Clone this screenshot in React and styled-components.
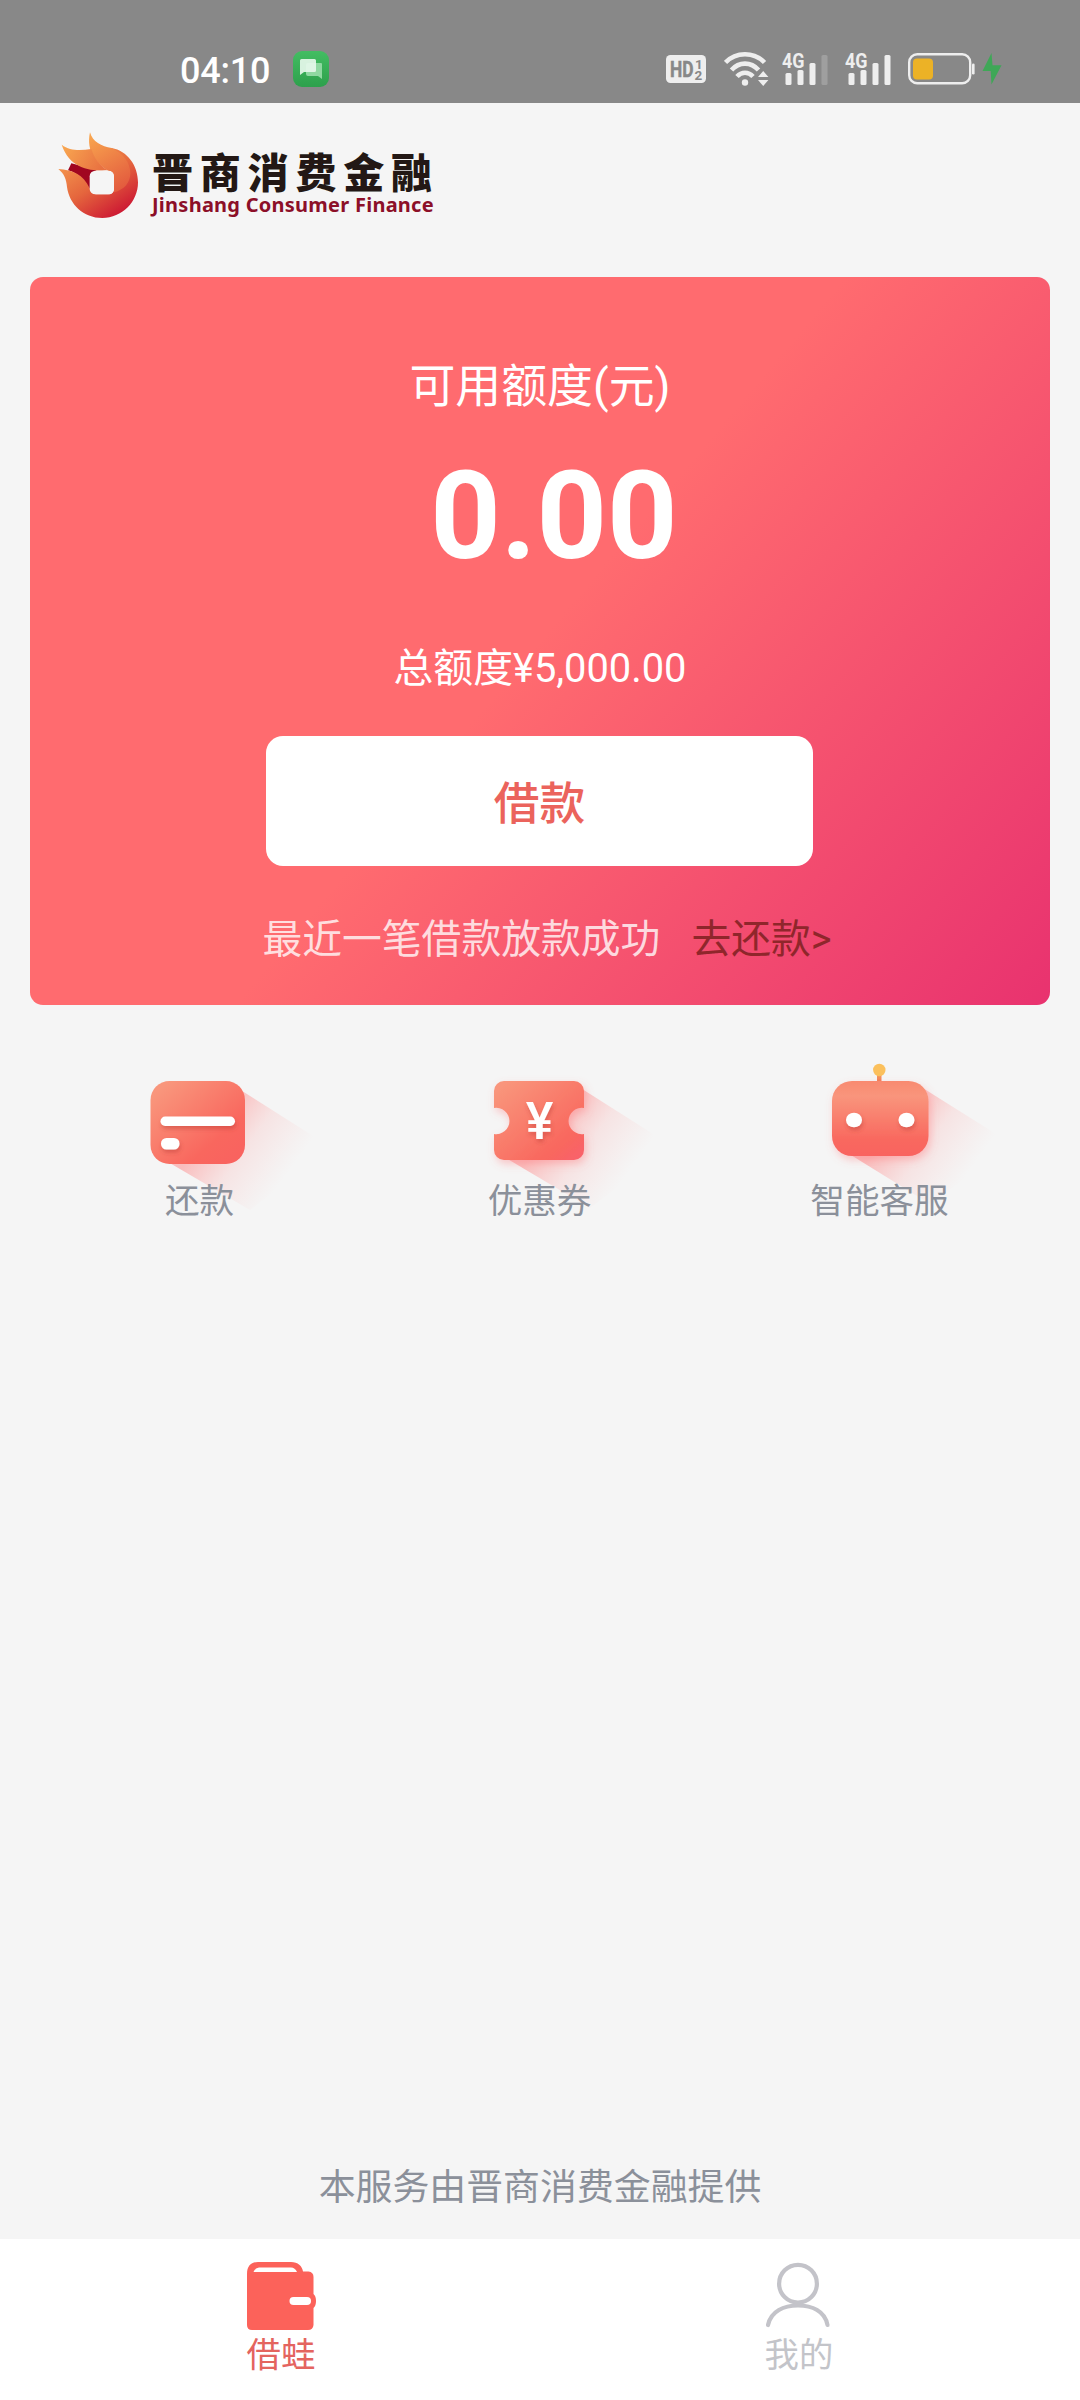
import React from 'react';
import styled, { createGlobalStyle } from 'styled-components';

const GlobalStyle = createGlobalStyle`
  * {
    box-sizing: border-box;
  }
  body {
    margin: 0;
    background: #f5f5f5;
    font-family: Roboto, 'Noto Sans CJK SC', sans-serif;
  }
`;

const Page = styled.div`
  width: 1080px;
  height: 2400px;
  display: flex;
  flex-direction: column;
  background: #f5f5f5;
  overflow: hidden;
`;

// Status bar
const StatusBar = styled.header`
  height: 103px;
  padding: 34px 78px 0 180px;
  display: flex;
  justify-content: space-between;
  align-items: center;
  background: #888;
`;
const StatusGroup = styled.div`
  display: flex;
  align-items: center;
  gap: ${(props) => props.$gap || 0}px;
`;
const Clock = styled.span`
  padding-top: 4px;
  color: #fff;
  font-size: 36px;
  font-weight: 500;
  line-height: 44px;
  letter-spacing: -0.2px;
`;

// Brand
const Brand = styled.div`
  height: 174px;
  padding: 29px 0 0 58px;
  display: flex;
  align-items: flex-start;
  gap: 14px;
`;
const BrandText = styled.div`
  padding-top: 15px;
  display: flex;
  flex-direction: column;
`;
const BrandName = styled.span`
  font-family: 'Noto Sans CJK SC', sans-serif;
  font-size: 41px;
  font-weight: 900;
  letter-spacing: 6.8px;
  line-height: 46px;
  color: #231815;
  white-space: nowrap;
`;
const BrandLatin = styled.span`
  font-family: 'Noto Sans', sans-serif;
  font-size: 20px;
  font-weight: 700;
  line-height: 24px;
  letter-spacing: 0.25px;
  color: #8c0f28;
  white-space: nowrap;
`;

// Credit card
const Card = styled.section`
  height: 728px;
  margin: 0 30px;
  display: flex;
  flex-direction: column;
  align-items: center;
  border-radius: 13px;
  background: linear-gradient(130deg, #ff6b6f 0%, #ff6b6f 50%, #e8316f 101%);
  color: #fff;
`;
const CardTitle = styled.h2`
  margin: 79px 0 0;
  font-size: 45.9px;
  font-weight: 400;
  line-height: 60px;
`;
const Amount = styled.strong`
  margin-top: 25px;
  padding-left: 28px;
  font-size: 123px;
  font-weight: 700;
  line-height: 150px;
`;
const Total = styled.p`
  margin: 52px 0 0;
  font-size: 39.8px;
  line-height: 52px;
`;
const BorrowButton = styled.button`
  width: 547px;
  height: 130px;
  margin: 41px 1px 0 0;
  padding: 0 0 2px;
  border: none;
  border-radius: 17px;
  background: #fff;
  color: #eb635c;
  font-family: inherit;
  font-size: 45.7px;
  font-weight: 500;
`;
const Notice = styled.p`
  margin: 48px 0 0;
  padding-left: 14px;
  display: flex;
  gap: 31px;
  font-size: 39.8px;
  line-height: 52px;
  color: rgba(255, 255, 255, 0.78);
`;
const RepayLink = styled.a`
  color: #8f262b;
`;

// Shortcuts
const Shortcuts = styled.nav`
  padding: 55px 30px 0;
  display: grid;
  grid-template-columns: repeat(3, 1fr);
`;
const Shortcut = styled.a`
  display: flex;
  flex-direction: column;
  align-items: center;
  svg {
    overflow: visible;
  }
`;
const ShortcutLabel = styled.span`
  position: relative;
  margin: 0 1px 0 0;
  font-size: 34.6px;
  line-height: 42px;
  color: #8b909a;
`;

const Provider = styled.footer`
  margin: auto 0 27px;
  text-align: center;
  font-size: 36.9px;
  line-height: 48px;
  color: #8b909a;
`;

// Bottom tabs
const TabBar = styled.nav`
  height: 161px;
  padding: 21px 22px 0;
  display: grid;
  grid-template-columns: 1fr 1fr;
  background: #fff;
`;
const Tab = styled.a`
  display: flex;
  flex-direction: column;
  align-items: center;
  gap: 1px;
  font-size: 34.4px;
  line-height: 44px;
  color: ${(props) => (props.$active ? '#e4645f' : '#c3c4c9')};
`;

function MessageIcon() {
  return (
    <svg width="36" height="36" viewBox="0 0 36 36">
      <defs>
        <linearGradient id="msg" x1="0" y1="0" x2="0" y2="1">
          <stop offset="0" stopColor="#43bd62" />
          <stop offset="1" stopColor="#2da04c" />
        </linearGradient>
      </defs>
      <rect width="36" height="36" rx="9" fill="url(#msg)" />
      <path d="M15 12h13a1 1 0 0 1 1 1v15l-4-3H15a2 2 0 0 1-2-2v-9a2 2 0 0 1 2-2z" fill="#8fd8a1" />
      <path d="M8.500 8h13a1.500 1.500 0 0 1 1.500 1.500v10a1.500 1.500 0 0 1-1.500 1.500H11l-4 3V9.500A1.500 1.500 0 0 1 8.500 8z" fill="#e6f7ea" fillOpacity=".92" />
    </svg>
  );
}

function HdIcon() {
  return (
    <svg width="40" height="28" viewBox="0 0 40 28" fontFamily="Roboto, sans-serif" fontWeight="700" fill="#888">
      <rect width="40" height="28" rx="4.500" fill="#eee" />
      <text x="4" y="22" fontSize="22.500" textLength="23.500" lengthAdjust="spacingAndGlyphs" stroke="#888" strokeWidth=".5">HD</text>
      <text x="29" y="13.500" fontSize="13.500">1</text>
      <text x="28.500" y="25" fontSize="13.500">2</text>
    </svg>
  );
}

function WifiIcon() {
  return (
    <svg width="46" height="36" viewBox="0 0 46 36" fill="none" stroke="#eee" strokeWidth="4.600">
      <path d="M1.500 11.500C12 .5 30 .5 40.500 11.500" />
      <path d="M7.500 19C15 10.500 27 10.500 34.500 19" />
      <path d="M13 25.500C17.500 20.500 24.500 20.500 29 25.500" />
      <circle cx="21" cy="31.500" r="3.200" fill="#eee" stroke="none" />
      <path d="M34 26l5.200-6 5.200 6zM34 29l5.200 6 5.200-6z" fill="#eee" stroke="none" />
    </svg>
  );
}

function SignalIcon({ weak }) {
  return (
    <svg width="46" height="42" viewBox="0 -4 46 42" fill="#eee">
      <text x="0" y="16" fontFamily="Roboto, sans-serif" fontWeight="700" fontSize="20.500" textLength="22.500" lengthAdjust="spacingAndGlyphs">4G</text>
      <rect x="3.500" y="21" width="6" height="12" rx="1.500" />
      <rect x="15.500" y="18" width="6" height="15" rx="1.500" />
      <rect x="27.500" y="11" width="6" height="22" rx="1.500" />
      <rect x="39.500" y="3" width="6" height="30" rx="1.500" fill={weak ? '#9f9f9f' : '#eee'} />
    </svg>
  );
}

function BatteryIcon() {
  return (
    <svg width="94" height="34" viewBox="0 0 94 34">
      <rect x="1.200" y="2.200" width="61" height="29" rx="8" fill="none" stroke="#eee" strokeWidth="2.400" />
      <rect x="5" y="6.500" width="20" height="21" rx="4" fill="#ecb226" />
      <rect x="64" y="11.500" width="2.600" height="11" rx="1.300" fill="#eee" />
      <path d="M83.500 1L74.500 19h8.200L83.500 32.500 93.500 13.300h-9z" fill="#3fa757" />
    </svg>
  );
}

function FlameLogo() {
  return (
    <svg width="80" height="86" viewBox="54 36 240 258">
      <defs>
        <linearGradient id="flame" gradientUnits="userSpaceOnUse" x1="110" y1="90" x2="240" y2="285">
          <stop offset="0" stopColor="#f59a4f" />
          <stop offset=".5" stopColor="#e5663d" />
          <stop offset="1" stopColor="#cc1733" />
        </linearGradient>
        <linearGradient id="flameInner" gradientUnits="userSpaceOnUse" x1="150" y1="50" x2="250" y2="215">
          <stop offset="0" stopColor="#f8a44e" />
          <stop offset="1" stopColor="#e2573d" />
        </linearGradient>
        <linearGradient id="flameLeft" gradientUnits="userSpaceOnUse" x1="70" y1="80" x2="180" y2="150">
          <stop offset="0" stopColor="#f8a650" />
          <stop offset="1" stopColor="#e97241" />
        </linearGradient>
      </defs>
      <path d="M94 130L84 151C110 158 132 178 150 210V170L170 150z" fill="#a00620" />
      <path d="M55 147C98 150 130 163 149 205C151 216 160 223 172 223H206C216 223 222 216 222 206V168C222 158 215 152 205 152L215 84C262 92 294 137 294 187C294 246 246 294 187 294C130 294 88 253 81 201C79 178 73 162 55 147z" fill="url(#flame)" />
      <path d="M150 37C157 65 185 80 215 84C248 100 271 126 271 160C271 188 252 210 222 217V168C222 158 215 152 205 152C172 134 137 96 150 37z" fill="url(#flameInner)" />
      <path d="M65 74C91 94 122 91 154 87C162 114 179 137 204 151C157 153 91 151 65 74z" fill="url(#flameLeft)" />
      <rect x="149" y="152" width="73" height="71" rx="17" fill="#f5f5f5" />
    </svg>
  );
}

function ShadowFade({ id }) {
  return (
    <linearGradient id={id} gradientUnits="userSpaceOnUse" x1="138" y1="72" x2="210" y2="124">
      <stop offset="0" stopColor="#ff7070" stopOpacity=".42" />
      <stop offset=".45" stopColor="#ff8080" stopOpacity=".15" />
      <stop offset="1" stopColor="#ff9090" stopOpacity="0" />
    </linearGradient>
  );
}

function RepayIcon() {
  return (
    <svg width="260" height="120" viewBox="0 0 260 120">
      <defs>
        <ShadowFade id="repayShadow" />
        <linearGradient id="repay" x1=".1" y1=".1" x2=".9" y2=".9">
          <stop offset="0" stopColor="#f9967c" />
          <stop offset=".75" stopColor="#f9675e" />
          <stop offset="1" stopColor="#f9635f" />
        </linearGradient>
        <filter id="drop" x="-30%" y="-60%" width="160%" height="250%">
          <feDropShadow dx="1" dy="3" stdDeviation="2" floodColor="#b93a30" floodOpacity=".45" />
        </filter>
      </defs>
      <path d="M169 29L262 88 180 150 98 102z" fill="url(#repayShadow)" />
      <rect x="80.500" y="21" width="94.500" height="83" rx="19" fill="url(#repay)" />
      <g fill="#fff" filter="url(#drop)">
        <rect x="90.500" y="56.500" width="74.500" height="9.500" rx="4.700" />
        <rect x="91" y="78" width="18.500" height="11.500" rx="5.500" />
      </g>
    </svg>
  );
}

function CouponIcon() {
  return (
    <svg width="260" height="120" viewBox="0 0 260 120">
      <defs>
        <ShadowFade id="couponShadow" />
        <linearGradient id="coupon" x1=".05" y1=".1" x2=".9" y2="1">
          <stop offset="0" stopColor="#f9957b" />
          <stop offset=".8" stopColor="#f9675e" />
          <stop offset="1" stopColor="#f9626a" />
        </linearGradient>
        <filter id="glow" x="-30%" y="-30%" width="160%" height="170%">
          <feDropShadow dx="2" dy="4" stdDeviation="4" floodColor="#ff6a70" floodOpacity=".35" />
        </filter>
      </defs>
      <path d="M169 27L262 86 180 148 96 98z" fill="url(#couponShadow)" />
      <path
        d="M94 21H164A10 10 0 0 1 174 31V48A13.200 13.200 0 1 0 174 74V90A10 10 0 0 1 164 100H94A10 10 0 0 1 84 90V74A13.200 13.200 0 1 0 84 48V31A10 10 0 0 1 94 21z"
        fill="url(#coupon)"
        filter="url(#glow)"
      />
      <text x="129.500" y="79" textAnchor="middle" fontFamily="Roboto, sans-serif" fontWeight="500" fontSize="52" fill="#fff" filter="url(#drop)">¥</text>
    </svg>
  );
}

function RobotIcon() {
  return (
    <svg width="260" height="120" viewBox="0 0 260 120">
      <defs>
        <ShadowFade id="robotShadow" />
        <linearGradient id="robot" x1="0" y1="0" x2="0" y2="1">
          <stop offset="0" stopColor="#f88a70" />
          <stop offset=".2" stopColor="#f9957c" />
          <stop offset=".8" stopColor="#f9675e" />
          <stop offset="1" stopColor="#f96460" />
        </linearGradient>
        <linearGradient id="antenna" x1="0" y1="0" x2="0" y2="1">
          <stop offset="0" stopColor="#fbc35a" />
          <stop offset="1" stopColor="#f0735a" />
        </linearGradient>
      </defs>
      <path d="M168 25L262 84 180 144 96 92z" fill="url(#robotShadow)" />
      <rect x="127" y="8" width="4.500" height="15" fill="url(#antenna)" />
      <circle cx="129.300" cy="10" r="6.200" fill="#fbc05c" />
      <rect x="82" y="21" width="96.500" height="75" rx="20" fill="url(#robot)" filter="url(#glow)" />
      <g fill="#fff" filter="url(#drop)">
        <ellipse cx="104" cy="60" rx="8" ry="7.300" />
        <ellipse cx="156.500" cy="60" rx="8" ry="7.300" />
      </g>
    </svg>
  );
}

function WalletIcon() {
  return (
    <svg width="72" height="72" viewBox="0 0 72 72">
      <path
        d="M13 2H46C53 2 57 6 58 11.500H63.500Q68.500 12 68.500 17V34Q71 36 71 41T68.500 48V65Q68 70 63 70H7Q2 70 2 65V14C2 6 6 2 13 2z"
        fill="#fc625a"
      />
      <path d="M14 7.500H46Q50 7.500 52 12H8.500Q10 8 14 7.500z" fill="#fff" />
      <rect x="44.500" y="37" width="21.500" height="8" rx="4" fill="#fff" />
    </svg>
  );
}

function PersonIcon() {
  return (
    <svg width="72" height="72" viewBox="0 0 72 72" fill="none" stroke="#c3c3c9" strokeWidth="4.200" strokeLinecap="round">
      <circle cx="35" cy="23.700" r="18.900" />
      <path d="M5 65C8 51 21 45.500 35 45.500S62 51 64.500 65" />
    </svg>
  );
}

const shortcuts = [
  { label: '还款', Icon: RepayIcon },
  { label: '优惠券', Icon: CouponIcon },
  { label: '智能客服', Icon: RobotIcon },
];

export default function App() {
  return (
    <>
      <GlobalStyle />
      <Page>
        <StatusBar>
          <StatusGroup $gap={23}>
            <Clock>04:10</Clock>
            <MessageIcon />
          </StatusGroup>
          <StatusGroup $gap={12}>
            <StatusGroup $gap={18}>
              <HdIcon />
              <WifiIcon />
            </StatusGroup>
            <StatusGroup $gap={17}>
              <SignalIcon weak />
              <SignalIcon />
              <BatteryIcon />
            </StatusGroup>
          </StatusGroup>
        </StatusBar>

        <Brand>
          <FlameLogo />
          <BrandText>
            <BrandName>晋商消费金融</BrandName>
            <BrandLatin>Jinshang Consumer Finance</BrandLatin>
          </BrandText>
        </Brand>

        <Card>
          <CardTitle>可用额度(元)</CardTitle>
          <Amount>0.00</Amount>
          <Total>总额度¥5,000.00</Total>
          <BorrowButton>借款</BorrowButton>
          <Notice>
            <span>最近一笔借款放款成功</span>
            <RepayLink>去还款&gt;</RepayLink>
          </Notice>
        </Card>

        <Shortcuts>
          {shortcuts.map(({ label, Icon }) => (
            <Shortcut key={label}>
              <Icon />
              <ShortcutLabel>{label}</ShortcutLabel>
            </Shortcut>
          ))}
        </Shortcuts>

        <Provider>本服务由晋商消费金融提供</Provider>

        <TabBar>
          <Tab $active>
            <WalletIcon />
            借蛙
          </Tab>
          <Tab>
            <PersonIcon />
            我的
          </Tab>
        </TabBar>
      </Page>
    </>
  );
}
